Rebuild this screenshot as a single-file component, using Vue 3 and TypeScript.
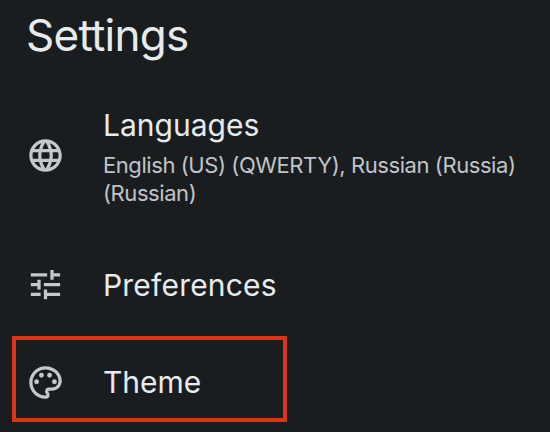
<script setup lang="ts">
interface SettingItem {
  id: string
  title: string
  summary?: string[]
  icon: string
  highlighted?: boolean
}

const items: SettingItem[] = [
  {
    id: 'languages',
    title: 'Languages',
    summary: ['English (US) (QWERTY), Russian (Russia)', '(Russian)'],
    icon: 'M11.99 2C6.47 2 2 6.48 2 12s4.47 10 9.99 10C17.52 22 22 17.52 22 12S17.52 2 11.99 2zm6.93 6h-2.95c-.32-1.25-.78-2.45-1.38-3.56 1.84.63 3.37 1.91 4.33 3.56zM12 4.04c.83 1.2 1.48 2.53 1.91 3.96h-3.82c.43-1.43 1.08-2.76 1.91-3.96zM4.26 14C4.1 13.36 4 12.69 4 12s.1-1.36.26-2h3.38c-.08.66-.14 1.32-.14 2s.06 1.34.14 2H4.26zm.82 2h2.95c.32 1.25.78 2.45 1.38 3.56-1.84-.63-3.37-1.9-4.33-3.56zm2.95-8H5.08c.96-1.66 2.49-2.93 4.33-3.56C8.81 5.55 8.35 6.75 8.03 8zM12 19.96c-.83-1.2-1.48-2.53-1.91-3.96h3.82c-.43 1.43-1.08 2.76-1.91 3.96zM14.34 14H9.66c-.09-.66-.16-1.32-.16-2s.07-1.35.16-2h4.68c.09.65.16 1.32.16 2s-.07 1.34-.16 2zm.25 5.56c.6-1.11 1.06-2.31 1.38-3.56h2.95c-.96 1.65-2.49 2.93-4.33 3.56zM16.36 14c.08-.66.14-1.32.14-2s-.06-1.34-.14-2h3.38c.16.64.26 1.31.26 2s-.1 1.36-.26 2h-3.38z',
  },
  {
    id: 'preferences',
    title: 'Preferences',
    icon: 'M3 17v2h6v-2H3zM3 5v2h10V5H3zm10 16v-2h8v-2h-8v-2h-2v6h2zM7 9v2H3v2h4v2h2V9H7zm14 4v-2H11v2h10zm-6-4h2V7h4V5h-4V3h-2v6z',
  },
  {
    id: 'theme',
    title: 'Theme',
    highlighted: true,
    icon: 'M12 22C6.49 22 2 17.51 2 12S6.49 2 12 2s10 4.04 10 9c0 3.31-2.69 6-6 6h-1.77c-.28 0-.5.22-.5.5 0 .12.05.23.13.33.41.47.64 1.06.64 1.67A2.5 2.5 0 0 1 12 22zm0-18c-4.41 0-8 3.59-8 8s3.59 8 8 8c.28 0 .5-.22.5-.5a.54.54 0 0 0-.14-.35c-.41-.46-.63-1.05-.63-1.65a2.5 2.5 0 0 1 2.5-2.5H16c2.21 0 4-1.79 4-4 0-3.86-3.59-7-8-7zM6.5 10a1.5 1.5 0 1 0 0 3 1.5 1.5 0 1 0 0-3zM9.5 6a1.5 1.5 0 1 0 0 3 1.5 1.5 0 1 0 0-3zM14.5 6a1.5 1.5 0 1 0 0 3 1.5 1.5 0 1 0 0-3zM17.5 10a1.5 1.5 0 1 0 0 3 1.5 1.5 0 1 0 0-3z',
  },
]
</script>

<template>
  <main class="settings">
    <h1 class="heading">Settings</h1>
    <ul class="list">
      <li
        v-for="item in items"
        :key="item.id"
        class="item"
        :class="[item.id, { highlighted: item.highlighted }]"
      >
        <svg class="icon" viewBox="0 0 24 24" aria-hidden="true">
          <path :d="item.icon" />
        </svg>
        <div class="text">
          <h2 class="title">{{ item.title }}</h2>
          <p v-if="item.summary" class="summary">
            <span v-for="line in item.summary" :key="line" class="line">{{ line }}</span>
          </p>
        </div>
      </li>
    </ul>
  </main>
</template>

<style>
body {
  margin: 0;
  background: #1a1d1f;
}
</style>

<style scoped>
.settings {
  box-sizing: border-box;
  width: 550px;
  height: 432px;
  padding: 8px 12px 0;
  overflow: hidden;
  background: #1a1d1f;
  color: #e8ebee;
  font-family: Inter, Roboto, sans-serif;
}

.heading {
  margin: 0;
  padding-left: 14px;
  font-size: 44px;
  font-weight: 400;
  line-height: 54px;
  letter-spacing: -0.75px;
}

.list {
  margin: 0;
  padding: 0;
  list-style: none;
}

.item {
  display: flex;
  align-items: center;
  box-sizing: border-box;
  width: 275px;
  border: 4px solid transparent;
  padding-left: 10px;
}

.languages {
  width: 526px;
  height: 124px;
  margin-top: 32px;
}

.languages .icon {
  margin-bottom: 1px;
}

.preferences {
  height: 86px;
  margin-top: 23px;
}

.preferences .text {
  padding-top: 2px;
}

.preferences .title {
  letter-spacing: 0.2px;
}

.theme {
  height: 86px;
  margin-top: 9px;
}

.theme .text {
  padding-top: 6px;
}

.theme .icon {
  margin-top: 6px;
}

.highlighted {
  border-color: #e03313;
}

.icon {
  flex: none;
  width: 39px;
  height: 39px;
  fill: #c4c8cc;
}

.text {
  margin-left: 38px;
  white-space: nowrap;
}

.title {
  margin: 0;
  font-size: 30px;
  font-weight: 400;
  line-height: 36px;
}

.summary {
  margin: 8px 0 -2px;
  color: #c0c4c9;
  font-size: 22px;
  line-height: 28px;
  letter-spacing: -0.43px;
}

.line {
  display: block;
}
</style>
